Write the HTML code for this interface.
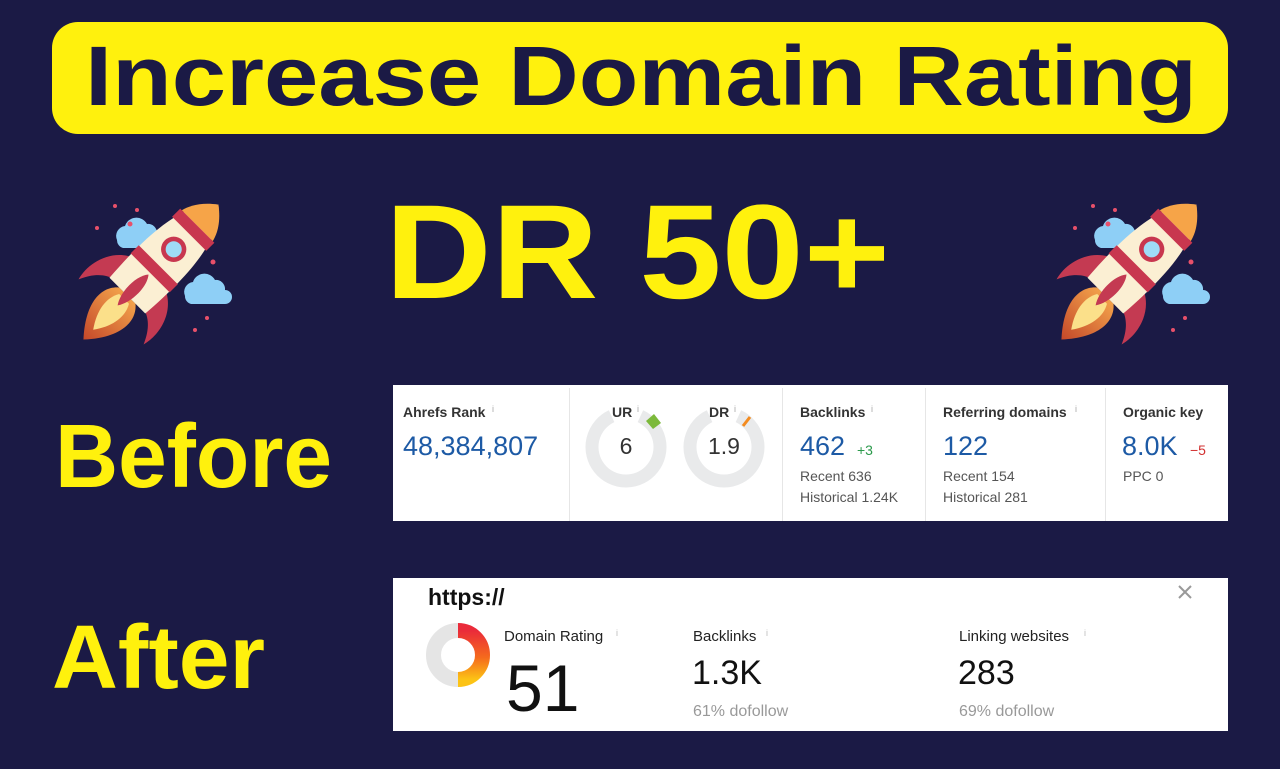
<!DOCTYPE html>
<html><head><meta charset="utf-8"><style>
html,body{margin:0;padding:0;background:#1b1a45;width:1280px;height:769px;overflow:hidden}
svg{display:block}
text{font-family:"Liberation Sans",Arial,sans-serif}
</style></head><body>
<svg width="1280" height="769" viewBox="0 0 1280 769" xmlns="http://www.w3.org/2000/svg">
<defs>
<linearGradient id="dg" x1="0" y1="0" x2="0" y2="1"><stop offset="0" stop-color="#ea2b3a"/><stop offset="0.55" stop-color="#f56a1d"/><stop offset="1" stop-color="#fcc315"/></linearGradient>
<linearGradient id="fl" x1="0" y1="0" x2="0" y2="1"><stop offset="0" stop-color="#f2a14a"/><stop offset="1" stop-color="#c4482a"/></linearGradient>
<g id="rocket">
 <g fill="#8ecff6">
  <path d="M-38,-28 a10,10 0 0 1 8,-14 a12,12 0 0 1 22,-2 a9,9 0 0 1 10,10 a7,7 0 0 1 0,14 h-34 a8,8 0 0 1 -6,-8z"/>
  <path d="M30,28 a10,10 0 0 1 8,-14 a12,12 0 0 1 22,-2 a9,9 0 0 1 10,10 a7,7 0 0 1 0,14 h-34 a8,8 0 0 1 -6,-8z"/>
 </g>
 <g fill="#e8506a">
  <circle cx="-40" cy="-62" r="2"/><circle cx="-18" cy="-58" r="2"/><circle cx="-25" cy="-44" r="2.5"/><circle cx="-58" cy="-40" r="2"/>
  <circle cx="58" cy="-6" r="2.5"/><circle cx="52" cy="50" r="2"/><circle cx="40" cy="62" r="2"/>
 </g>
 <g transform="rotate(45) scale(1.15)">
  <path d="M-22,8 C-40,18 -44,40 -40,54 C-34,40 -26,34 -18,32Z" fill="#c43a52"/>
  <path d="M22,8 C40,18 44,40 40,54 C34,40 26,34 18,32Z" fill="#c43a52"/>
  <path d="M-10,34 C-22,44 -22,64 0,88 C22,64 22,44 10,34Z" fill="url(#fl)"/>
  <path d="M-6,38 C-12,48 -10,62 0,76 C10,62 12,48 6,38Z" fill="#fbe08a"/>
  <path d="M0,-78 C22,-60 26,-20 22,34 L-22,34 C-26,-20 -22,-60 0,-78Z" fill="#fbefd3"/>
  <path d="M0,-78 C12,-69 17,-60 19,-52 L-19,-52 C-17,-60 -12,-69 0,-78Z" fill="#f6a448"/>
  <rect x="-21" y="-52" width="42" height="10" fill="#c8374f"/>
  <rect x="-24" y="-4" width="48" height="10" fill="#c8374f"/>
  <circle cx="0" cy="-23" r="11" fill="#c8374f"/><circle cx="0" cy="-23" r="7" fill="#9fdcf7"/>
  <path d="M0,8 C7,16 7,36 0,46 C-7,36 -7,16 0,8Z" fill="#c43a52"/>
 </g>
</g>
</defs>
<rect width="1280" height="769" fill="#1b1a45"/>
<rect x="52" y="22" width="1176" height="112" rx="26" fill="#fff10d"/>
<text x="85" y="105" font-size="84" font-weight="bold" fill="#1b1a45" textLength="1112" lengthAdjust="spacingAndGlyphs">Increase Domain Rating</text>
<text x="385" y="298" font-size="134" font-weight="bold" fill="#fff10d" textLength="505" lengthAdjust="spacingAndGlyphs">DR 50+</text>
<text x="55" y="487" font-size="90" font-weight="bold" fill="#fff10d" textLength="277" lengthAdjust="spacingAndGlyphs">Before</text>
<text x="52" y="688" font-size="90" font-weight="bold" fill="#fff10d" textLength="213" lengthAdjust="spacingAndGlyphs">After</text>
<use href="#rocket" transform="translate(155,268)"/>
<use href="#rocket" transform="translate(1133,268)"/>

<rect x="393" y="385" width="835" height="136" fill="#fff"/>
<g stroke="#e6e6e6" stroke-width="1"><line x1="569.5" y1="388" x2="569.5" y2="521"/><line x1="782.5" y1="388" x2="782.5" y2="521"/><line x1="925.5" y1="388" x2="925.5" y2="521"/><line x1="1105.5" y1="388" x2="1105.5" y2="521"/></g>
<g fill="none" stroke="#e9eaeb" stroke-width="13">
 <path d="M640.4,416.2 A34,34 0 1 1 611.6,416.2"/>
 <path d="M738.4,416.2 A34,34 0 1 1 709.6,416.2"/>
</g>
<path d="M646,421 l8,-7 l7,9 l-8,6z" fill="#7cb93b"/>
<path d="M743,426 l7,-9" stroke="#f38b1f" stroke-width="3"/>
<g font-size="14" font-weight="bold" fill="#333">
 <text x="403" y="417">Ahrefs Rank</text><text x="612" y="417">UR</text><text x="709" y="417">DR</text>
 <text x="800" y="417">Backlinks</text><text x="943" y="417">Referring domains</text><text x="1123" y="417">Organic key</text>
</g>
<g font-size="9" fill="#aaa"><text x="492" y="412">i</text><text x="637" y="412">i</text><text x="734" y="412">i</text><text x="871" y="412">i</text><text x="1075" y="412">i</text></g>
<g font-size="27" fill="#1d5aa5"><text x="403" y="455">48,384,807</text><text x="800" y="455">462</text><text x="943" y="455">122</text><text x="1122" y="455">8.0K</text></g>
<text x="857" y="455" font-size="14" fill="#2c9a4c">+3</text>
<text x="1190" y="455" font-size="14" fill="#d23030">−5</text>
<text x="626" y="454" font-size="23" fill="#333" text-anchor="middle">6</text>
<text x="724" y="454" font-size="23" fill="#333" text-anchor="middle">1.9</text>
<g font-size="14" fill="#555"><text x="800" y="481">Recent 636</text><text x="800" y="502">Historical 1.24K</text><text x="943" y="481">Recent 154</text><text x="943" y="502">Historical 281</text><text x="1123" y="481">PPC 0</text></g>

<rect x="393" y="578" width="835" height="153" fill="#fff"/>
<text x="428" y="605" font-size="23" font-weight="bold" fill="#111" font-family="Liberation Mono">https://</text>
<path d="M1179,586 l12,12 M1191,586 l-12,12" stroke="#999" stroke-width="2"/>
<path d="M458,630.5 A24.5,24.5 0 0 0 458,679.5" fill="none" stroke="#e5e5e5" stroke-width="15"/>
<path d="M458,630.5 A24.5,24.5 0 0 1 458,679.5" fill="none" stroke="url(#dg)" stroke-width="15"/>
<g font-size="15" fill="#222"><text x="504" y="641">Domain Rating</text><text x="693" y="641">Backlinks</text><text x="959" y="641">Linking websites</text></g>
<g font-size="9" fill="#bbb"><text x="616" y="636">i</text><text x="766" y="636">i</text><text x="1084" y="636">i</text></g>
<text x="506" y="711" font-size="66" fill="#111">51</text>
<text x="692" y="684" font-size="34" fill="#111">1.3K</text>
<text x="958" y="684" font-size="34" fill="#111">283</text>
<g font-size="16" fill="#999"><text x="693" y="716">61% dofollow</text><text x="959" y="716">69% dofollow</text></g>
</svg>
</body></html>
